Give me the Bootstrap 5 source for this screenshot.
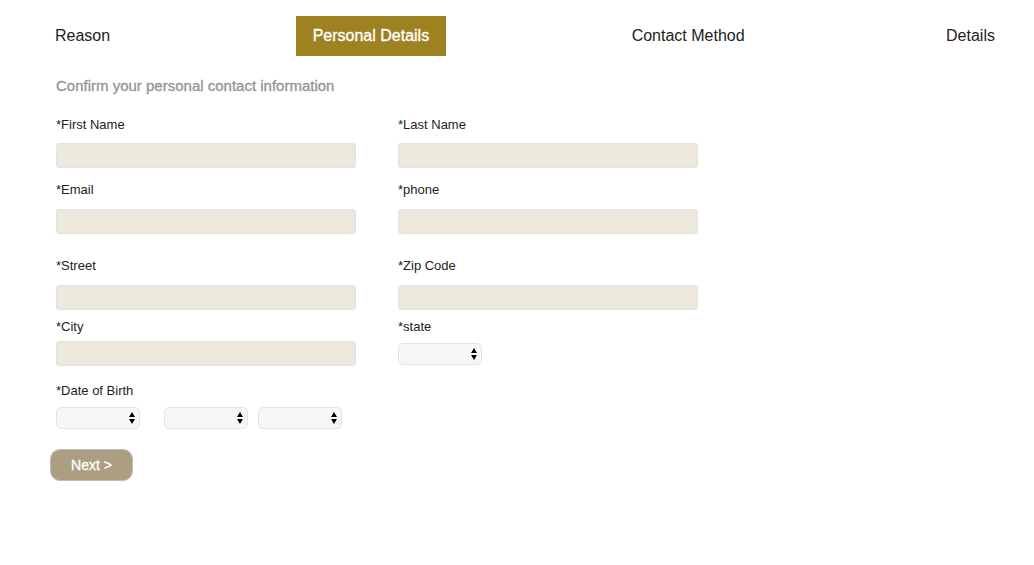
<!DOCTYPE html>
<html lang="en">
<head>
<meta charset="utf-8">
<meta name="viewport" content="width=device-width, initial-scale=1">
<title>Personal Details</title>
<link href="https://cdn.jsdelivr.net/npm/bootstrap@5.3.0/dist/css/bootstrap.min.css" rel="stylesheet">
<style>
  body { font-family: "Liberation Sans", Arial, sans-serif; color: #222; background: #fff; }
  .steps { padding: 16px 23px 0 39px; }
  .steps .nav-link { padding: 8px 16px; line-height: 24px; color: #222; border-radius: 0; }
  .steps .nav-link.active { background: #9e8120; color: #fff; padding: 8px 17px; -webkit-text-stroke: thin #fff; }
  .contact-form { padding: 20px 24px 24px 56px; }
  .intro { font-size: 15px; line-height: 20px; color: #949494; -webkit-text-stroke: thin #949494; margin: 0 0 19px; }
  .fields { max-width: 642px; }
  .fields .row { --bs-gutter-x: 42px; }
  .form-label { display: block; width: fit-content; font-size: 13px; line-height: 20px; margin: 0 0 9px; }
  .form-control { height: 25px; padding: 2px 6px; font-size: 13px; background: #ece8dc; border: 1px solid #e0e2e6; border-radius: 3px; }
  .form-control:focus { background: #ece8dc; }
  .first-row .form-label { margin-bottom: 8px; }
  .tight .form-label { margin-bottom: 4px; }
  .birth .form-label { margin-bottom: 6px; }
  .gap-s { margin-bottom: 7px; }
  .gap-m { margin-bottom: 12px; }
  .gap-l { margin-bottom: 22px; }
  .gap-xl { margin-bottom: 15px; }
  .form-select {
    width: 84px; height: 22px; padding: 0 16px 0 6px; font-size: 13px; line-height: 20px;
    border: 1px solid #e1e2e5; border-radius: 5px; background-color: #f7f7f7;
    background-image: url("data:image/svg+xml,%3Csvg xmlns='http://www.w3.org/2000/svg' viewBox='0 0 6 12'%3E%3Cpath d='M3 0 6 5H0zM0 7h6L3 12z'/%3E%3C/svg%3E");
    background-size: 6px 12px; background-position: right 4px center;
  }
  .state-select { margin-top: 6px; }
  .month { margin-right: 24px; }
  .day { margin-right: 10px; }
  .btn-next {
    margin: 20px 0 0 -6px; width: 83px; height: 32px; padding: 0; font-size: 14px; line-height: 20px;
    -webkit-text-stroke: thin #fff;
    color: #fff; background: #ad9e81; border: 1px solid #bdbdc0; border-radius: 10px;
  }
  .btn-next:hover { color: #fff; background: #9c8d70; }
</style>
</head>
<body>
<nav class="nav steps justify-content-between" aria-label="Steps">
  <a class="nav-link" href="#">Reason</a>
  <a class="nav-link active" href="#" aria-current="step">Personal Details</a>
  <a class="nav-link" href="#">Contact Method</a>
  <a class="nav-link" href="#">Details</a>
</nav>
<main>
  <form class="contact-form">
    <p class="intro">Confirm your personal contact information</p>
    <div class="fields">
      <div class="row first-row gap-m">
        <div class="col-6"><label class="form-label" for="first">*First Name</label><input class="form-control" id="first" type="text"></div>
        <div class="col-6"><label class="form-label" for="last">*Last Name</label><input class="form-control" id="last" type="text"></div>
      </div>
      <div class="row gap-l">
        <div class="col-6"><label class="form-label" for="email">*Email</label><input class="form-control" id="email" type="email"></div>
        <div class="col-6"><label class="form-label" for="phone">*phone</label><input class="form-control" id="phone" type="tel"></div>
      </div>
      <div class="row gap-s">
        <div class="col-6"><label class="form-label" for="street">*Street</label><input class="form-control" id="street" type="text"></div>
        <div class="col-6"><label class="form-label" for="zip">*Zip Code</label><input class="form-control" id="zip" type="text"></div>
      </div>
      <div class="row tight gap-xl">
        <div class="col-6"><label class="form-label" for="city">*City</label><input class="form-control" id="city" type="text"></div>
        <div class="col-6"><label class="form-label" for="state">*state</label><select class="form-select state-select" id="state"><option></option></select></div>
      </div>
      <div class="birth">
        <label class="form-label" for="month">*Date of Birth</label>
        <div class="d-flex">
          <select class="form-select month" id="month"><option></option></select>
          <select class="form-select day" aria-label="Day"><option></option></select>
          <select class="form-select" aria-label="Year"><option></option></select>
        </div>
      </div>
      <button class="btn btn-next" type="submit">Next &gt;</button>
    </div>
  </form>
</main>
<script src="https://cdn.jsdelivr.net/npm/bootstrap@5.3.0/dist/js/bootstrap.bundle.min.js"></script>
</body>
</html>
